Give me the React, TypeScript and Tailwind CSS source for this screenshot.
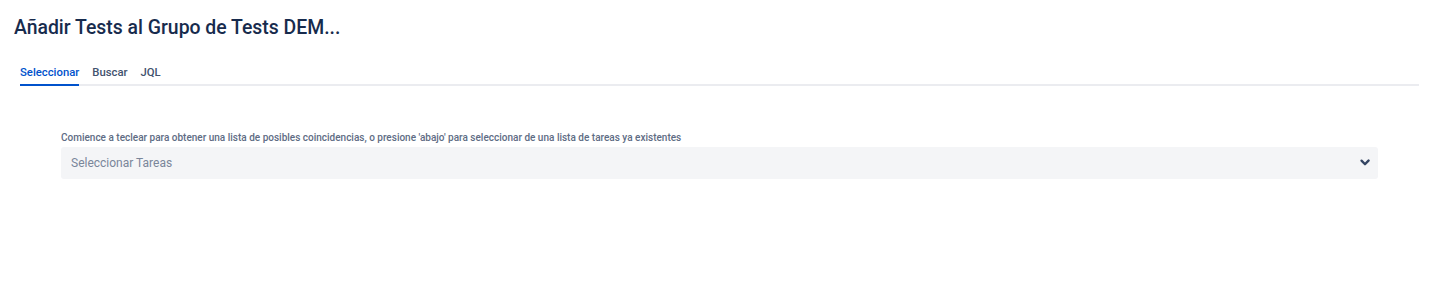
export default function App() {
  return (
    <div className="min-h-[288px] bg-white font-['Roboto','Liberation_Sans',sans-serif] text-[#172b4d]">
      <div className="pl-[14px] pr-[21px] pt-[16px]">
        <h1 className="text-[19.4px] font-medium leading-[24px]">Añadir Tests al Grupo de Tests DEM...</h1>
        <div className="mt-[25px] ml-[6px] flex border-b-2 border-[#ebecf0]">
          <button className="-mb-[2px] border-b-2 border-[#0052cc] pb-[3px] text-[11.3px] font-medium leading-[16px] text-[#0052cc]">
            Seleccionar
          </button>
          <button className="ml-[13px] pb-[3px] text-[11.3px] font-medium leading-[16px] text-[#42526e]">Buscar</button>
          <button className="ml-[13px] pb-[3px] text-[11.3px] font-medium leading-[16px] text-[#42526e]">JQL</button>
        </div>
        <div className="ml-[47px] mr-[41px] mt-[46px]">
          <label className="block text-[10px] font-medium leading-[12px] text-[#5e6c84]">
            Comience a teclear para obtener una lista de posibles coincidencias, o presione 'abajo' para seleccionar de una lista de tareas ya existentes
          </label>
          <div className="mt-[3px] flex h-[32px] items-center justify-between rounded-[3px] bg-[#f4f5f7] pl-[10px] pr-[6px]">
            <span className="text-[12px] text-[#7a869a]">Seleccionar Tareas</span>
            <svg width="14" height="14" viewBox="0 0 24 24" className="text-[#344563]">
              <path d="M8.3 9.3a1 1 0 0 1 1.4 0L12 11.6l2.3-2.3a1 1 0 1 1 1.4 1.4l-3 3a1 1 0 0 1-1.4 0l-3-3a1 1 0 0 1 0-1.4z" fill="currentColor" transform="translate(-12 -12) scale(2)" />
            </svg>
          </div>
        </div>
      </div>
    </div>
  );
}
